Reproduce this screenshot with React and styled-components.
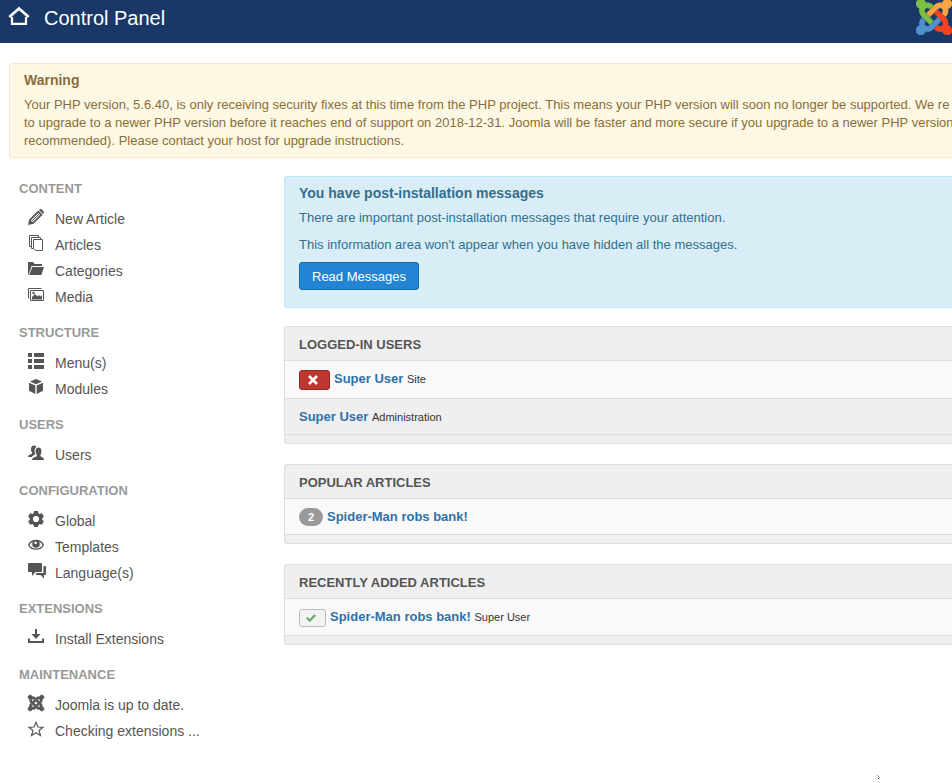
import React from "react";
import styled, { createGlobalStyle } from "styled-components";

const GlobalStyle = createGlobalStyle`
  *, *::before, *::after { box-sizing: border-box; }
  body {
    margin: 0;
    overflow-x: hidden;
    background: #fff;
    color: #333;
    font: 13px/18px "Liberation Sans", Arial, sans-serif;
  }
  h1, h2, h3, h4, p, ul { margin: 0; padding: 0; }
  ul { list-style: none; }
  a { color: inherit; text-decoration: none; }
  button { font: inherit; cursor: pointer; }
`;

const Header = styled.header`
  display: flex;
  align-items: flex-start;
  height: 43px;
  padding-left: 8px;
  background: #1a3867;
  color: #fff;
`;

const HomeIcon = styled.svg`
  flex: none;
  width: 22px;
  height: 20px;
  margin-top: 6px;
`;

const PageTitle = styled.h1`
  flex: 1;
  margin-left: 14px;
  font-size: 20px;
  line-height: 36px;
  font-weight: 400;
`;

const BrandLogo = styled.svg`
  flex: none;
  display: block;
  width: 36px;
  height: 36px;
  margin-top: -1px;
`;

const Alert = styled.section`
  padding: 8px 0 7px 14px;
  border: 1px solid ${(p) => (p.$info ? "#bce8f1" : "#f7e8c8")};
  border-right: 0;
  border-radius: 3px 0 0 3px;
  background: ${(p) => (p.$info ? "#d9edf7" : "#fcf8e3")};
  color: ${(p) => (p.$info ? "#31708f" : "#8a6d3b")};
`;

const AlertTitle = styled.h2`
  margin-bottom: 8px;
  font-size: 14px;
  line-height: 16px;
`;

const AlertLine = styled.span`
  display: block;
  white-space: nowrap;
`;

const AlertText = styled.p`
  margin-bottom: 9px;
`;

const PrimaryButton = styled.button`
  display: block;
  height: 28px;
  margin: -1px 0 10px;
  padding: 1px 12px 0;
  border: 1px solid #1b67a5;
  border-radius: 3px;
  background: #2384d3;
  color: #fff;
`;

const Page = styled.main`
  padding: 20px 0 0 9px;
`;

const Columns = styled.div`
  display: grid;
  grid-template-columns: 275px minmax(0, 1fr);
  padding-top: 18px;
`;

const Sidebar = styled.nav`
  padding: 4px 0 0 10px;
`;

const NavGroup = styled.section`
  padding-bottom: 14px;
`;

const NavTitle = styled.h2`
  padding-bottom: 8px;
  font-size: 13px;
  line-height: 18px;
  color: #999;
  text-transform: uppercase;
`;

const NavLink = styled.a`
  display: flex;
  align-items: center;
  gap: 11px;
  height: 26px;
  padding-left: 9px;
  color: #555;
  font-size: 14px;
`;

const NavIcon = styled.svg`
  flex: none;
  width: 16px;
  height: 16px;
  margin-bottom: 4px;
  overflow: visible;
`;

const Panels = styled.div`
  display: flex;
  flex-direction: column;
  gap: 20px;
  padding-top: 18px;
`;

const Panel = styled.section`
  padding-bottom: 8px;
  border: 1px solid #e0e0e0;
  border-right: 0;
  border-radius: 3px 0 0 3px;
  background: #efefef;
`;

const PanelTitle = styled.h2`
  padding: 9px 0 6px 14px;
  font-size: 13px;
  line-height: 18px;
  color: #555;
  text-transform: uppercase;
`;

const Row = styled.li`
  display: flex;
  align-items: flex-start;
  gap: 4px;
  padding: 9px 0 8px 14px;
  border-top: 1px solid #ddd;
  background: #f9f9f9;

  &:nth-child(even) { background: #efefef; }
`;

const Rows = styled.ul`
  border-bottom: 1px solid #ddd;
`;

const RowLink = styled.a`
  color: #3071a9;
  font-weight: 700;
`;

const Note = styled.small`
  font-size: 11px;
  color: #333;
`;

const DangerButton = styled.button`
  display: grid;
  place-items: center;
  width: 31px;
  height: 20px;
  padding: 0 3px 0 0;
  border: 1px solid #942a25;
  border-radius: 3px;
  background: #bd362f;
  color: #fff;
`;

const StateButton = styled.button`
  display: grid;
  place-items: center;
  width: 27px;
  height: 18px;
  margin-top: 1px;
  padding: 0 3px 0 0;
  border: 1px solid #bbb;
  border-radius: 3px;
  background: #f3f3f3;
  color: #66a867;
`;

const Badge = styled.span`
  width: 24px;
  border-radius: 9px;
  background: #999;
  color: #fff;
  font-size: 11px;
  font-weight: 700;
  text-align: center;
`;

const Footer = styled.footer`
  display: flex;
  justify-content: flex-end;
  padding: 17px 71px 2px 0;
`;

const KNOT = [
  ["#7ac143", "M.6 92.1C.6 58.8 27.4 32 60.4 32c30 0 54.5 21.9 59.2 50.2 32.6-7.6 67.1.6 96.5 30l-44.3 44.3c-20.5-20.5-42.6-16.3-55.4-3.5-14.3 14.3-14.3 37.9 0 52.2l99.5 99.5-44 44.3c-87.7-87.2-49.7-49.7-99.8-99.7-26.8-26.5-35-64.8-24.8-98.9C20.4 144.6.6 120.7.6 92.1z"],
  ["#f9a541", "M130.1 208.5l44.3 44.3c10-10 89.7-89.7 99.7-99.8 14.3-14.3 37.6-14.3 51.9 0 12.8 12.8 17 35-3.5 55.4l44 44.3c31.2-31.2 38.5-67.6 28.9-101.2 29.2-4.1 51.9-29.2 51.9-59.5 0-33.2-26.8-60.1-59.8-60.1-30.3 0-55.4 22.5-59.5 51.6-33.8-9.9-71.7-1.5-98.3 25.1-18.3 19.1-71.1 71.5-99.6 99.9z"],
  ["#f44321", "M396.4 360.7c8.2-32.7-.9-68.5-26.3-93.9-11.8-12.2 5 4.7-99.5-99.7l-44.3 44.3 99.7 99.7c14.3 14.3 14.3 37.6 0 51.9-12.8 12.8-35 17-55.4-3.5l-44 44.3c27.6 30.2 68 38.8 102.7 28 5.5 27.4 29.7 48.1 58.9 48.1 33 0 59.8-26.8 59.8-60.1 0-30.2-22.5-55-51.6-59.1z"],
  ["#5091cd", "M312.1 307.6l-44-44.3c-87 86.4-50.4 50.4-99.7 99.8-14.3 14.3-37.6 14.3-51.9 0-13.1-13.4-16.9-35.3 3.2-55.4l-44-44.3c-30.2 30.2-38 65.2-29.5 98.3-26.7 6-46.2 29.9-46.2 58.2C0 453.2 26.8 480 59.8 480c28.6 0 52.5-19.8 58.6-46.7 32.7 8.2 68.5-.6 94.2-26 32.1-32 12.2-12.4 99.5-99.7z"],
];

const ICONS = {
  pencil: (
    <>
      <path fillRule="evenodd" d="M0 16l1.200-5.500L10.300 1.400l4.300 4.300-9.100 9.100zM2.800 11.500l1.700 1.700 7.500-7.500L10.300 4z" />
      <path d="M4 12l6.800-6.800" stroke="currentColor" strokeWidth="1" />
      <path d="M11 .9l.9-.7q.8-.5 1.500 0l2.300 2.300q.5.800 0 1.500l-.7.900z" />
    </>
  ),
  copy: (
    <g fill="none" stroke="currentColor" strokeLinejoin="round">
      <path d="M5.500 4.500h9v11h-7l-2-2z" />
      <path d="M5.500 13.500h-2v-11h9v2M3.500 11.500h-2V.5h9v2" />
    </g>
  ),
  folder: <path d="M0 14V1h5l1.500 2H14v2H3.500L.8 13zM4.200 6H16l-2.600 8H1.200z" />,
  images: (
    <>
      <path d="M.5 11.500v-10h13M2.500 3.500h13v10h-13z" fill="none" stroke="currentColor" />
      <path d="M4 12.500V10l3-3 2.500 2.600 1.500-1.600 1.500 1.500L14 8v4.500z" />
      <circle cx="5.500" cy="6" r="1.200" />
    </>
  ),
  list: <path d="M0 0h4v4H0zM6 0h10v4H6zM0 6h4v4H0zM6 6h10v4H6zM0 12h4v4H0zM6 12h10v4H6z" />,
  box: <path d="M8 0l6 2.500L8 5.200 2 2.500zM1 3.800l6.300 2.700V15L1 11.800zM15 3.800L8.700 6.500V15l6.300-3.200z" />,
  users: (
    <>
      <path d="M0 12c0-2 1.500-2.400 3.500-3 .8-.3.7-1 .3-1.700C2.500 5 2.500.5 6 .5c1.300 0 2.100.5 2.500 1.200C6.300 3.200 6.200 6 7 8c.2 1 .2 1.400-.5 1.800-1 .6-2.200 1-2.700 2.200z" />
      <path d="M4 15c0-2.300 1.900-2.800 3.900-3.300 1.200-.4 1.100-1.300.6-2.200C7.200 7.200 7 2.500 10.500 2.500s3.400 4.700 2.200 7c-.5.9-.6 1.800.6 2.200 1.400.5 2.700 1 2.700 3.300z" />
    </>
  ),
  cog: (
    <>
      <circle cx="8" cy="8" r="4.700" fill="none" stroke="currentColor" strokeWidth="3.200" />
      <path d="M6 0h4l.6 3H5.400zM6 16h4l.6-3H5.400zM.1 5.700l2-3.400 3 1L2.500 7.800zM15.900 5.700l-2-3.400-3 1 2.600 4.500zM.1 10.300l2 3.400 3-1-2.600-4.500zM15.900 10.300l-2 3.400-3-1 2.600-4.500z" />
    </>
  ),
  eye: (
    <>
      <path d="M.7 8C3.500 2 12.500 2 15.300 8 12.500 13.500 3.500 13.500.7 8z" fill="none" stroke="currentColor" strokeWidth="1.400" />
      <path fillRule="evenodd" d="M4.200 7a3.800 3.800 0 1 1 7.600 0 3.800 3.800 0 1 1-7.600 0zm2.100-1a1.300 1.300 0 1 0 1.600-1.400A1.400 1.400 0 0 0 6.300 6z" />
    </>
  ),
  comments: (
    <>
      <path d="M1 0h12q1 0 1 1v7q0 1-1 1H7.500L4 13V9H1Q0 9 0 8V1q0-1 1-1z" />
      <path d="M15.500 3H17q1 0 1 1v7q0 1-1 1h-1v3.500L12.500 12H8.500l-1-1 1.200-1H15.500z" />
    </>
  ),
  download: (
    <path d="M7 0h2v5h3.500L8 10 3.500 5H7zM0 9.500h2V12h12V9.500h2V14H0z" />
  ),
  star: (
    <path d="M8 1.200l2 4.800 5 .3-3.900 3.200 1.300 5L8 11.800l-4.400 2.700 1.300-5L1 6.300 6 6z" fill="none" stroke="currentColor" strokeWidth="1.200" />
  ),
};

function Icon({ name }) {
  if (name === "joomla") {
    return (
      <NavIcon viewBox="0 32 448 448" fill="currentColor" stroke="currentColor" strokeWidth="16" aria-hidden="true">
        {KNOT.map(([color, d]) => <path key={color} d={d} />)}
      </NavIcon>
    );
  }
  return <NavIcon viewBox="0 0 16 16" fill="currentColor" aria-hidden="true">{ICONS[name]}</NavIcon>;
}

const NAV = [
  ["Content", [["pencil", "New Article"], ["copy", "Articles"], ["folder", "Categories"], ["images", "Media"]]],
  ["Structure", [["list", "Menu(s)"], ["box", "Modules"]]],
  ["Users", [["users", "Users"]]],
  ["Configuration", [["cog", "Global"], ["eye", "Templates"], ["comments", "Language(s)"]]],
  ["Extensions", [["download", "Install Extensions"]]],
  ["Maintenance", [["joomla", "Joomla is up to date."], ["star", "Checking extensions ..."]]],
];

function Entry({ title, note }) {
  return (
    <span>
      <RowLink href="#">{title}</RowLink>
      {note && <> <Note>{note}</Note></>}
    </span>
  );
}

export default function App() {
  return (
    <>
      <GlobalStyle />
      <Header>
        <HomeIcon viewBox="0 0 22 20" fill="none" stroke="currentColor" aria-hidden="true">
          <path d="M1.300 11L11 2.500l9.700 8.500" strokeWidth="2.800" />
          <path d="M4 11v6.800h14V11" strokeWidth="2.200" />
        </HomeIcon>
        <PageTitle>Control Panel</PageTitle>
        <BrandLogo viewBox="0 32 448 448" role="img" aria-label="Joomla">
          {KNOT.map(([color, d]) => <path key={color} d={d} fill={color} stroke={color} strokeWidth="8" />)}
        </BrandLogo>
      </Header>
      <Page>
        <Alert>
          <AlertTitle>Warning</AlertTitle>
          <p>
            <AlertLine>Your PHP version, 5.6.40, is only receiving security fixes at this time from the PHP project. This means your PHP version will soon no longer be supported. We re</AlertLine>
            <AlertLine>to upgrade to a newer PHP version before it reaches end of support on 2018-12-31. Joomla will be faster and more secure if you upgrade to a newer PHP version</AlertLine>
            <AlertLine>recommended). Please contact your host for upgrade instructions.</AlertLine>
          </p>
        </Alert>
        <Columns>
          <Sidebar aria-label="Control panel">
            {NAV.map(([title, items]) => (
              <NavGroup key={title}>
                <NavTitle>{title}</NavTitle>
                <ul>
                  {items.map(([icon, label]) => (
                    <li key={label}>
                      <NavLink href="#"><Icon name={icon} />{label}</NavLink>
                    </li>
                  ))}
                </ul>
              </NavGroup>
            ))}
          </Sidebar>
          <div>
            <Alert $info>
              <AlertTitle>You have post-installation messages</AlertTitle>
              <AlertText>There are important post-installation messages that require your attention.</AlertText>
              <AlertText>This information area won't appear when you have hidden all the messages.</AlertText>
              <PrimaryButton type="button">Read Messages</PrimaryButton>
            </Alert>
            <Panels>
              <Panel>
                <PanelTitle>Logged-in Users</PanelTitle>
                <Rows>
                  <Row>
                    <DangerButton type="button" aria-label="Log out Super User">
                      <svg width="10" height="10" viewBox="0 0 10 10" stroke="currentColor" strokeWidth="2.600" aria-hidden="true">
                        <path d="M1 1l8 8M9 1L1 9" />
                      </svg>
                    </DangerButton>
                    <Entry title="Super User" note="Site" />
                  </Row>
                  <Row><Entry title="Super User" note="Administration" /></Row>
                </Rows>
              </Panel>
              <Panel>
                <PanelTitle>Popular Articles</PanelTitle>
                <Rows>
                  <Row><Badge>2</Badge><Entry title="Spider-Man robs bank!" /></Row>
                </Rows>
              </Panel>
              <Panel>
                <PanelTitle>Recently Added Articles</PanelTitle>
                <Rows>
                  <Row>
                    <StateButton type="button" aria-label="Published">
                      <svg width="10" height="8" viewBox="0 0 10 8" fill="none" stroke="currentColor" strokeWidth="2.200" aria-hidden="true">
                        <path d="M.8 3.800L3.700 6.500 9.200 1" />
                      </svg>
                    </StateButton>
                    <Entry title="Spider-Man robs bank!" note="Super User" />
                  </Row>
                </Rows>
              </Panel>
            </Panels>
          </div>
        </Columns>
      </Page>
      <Footer>
        <svg width="4" height="4" viewBox="0 0 4 4" aria-hidden="true">
          <path d="M0 0l3 3" stroke="#999" />
          <path d="M1 3h1v1H1z" fill="#111" />
        </svg>
      </Footer>
    </>
  );
}
